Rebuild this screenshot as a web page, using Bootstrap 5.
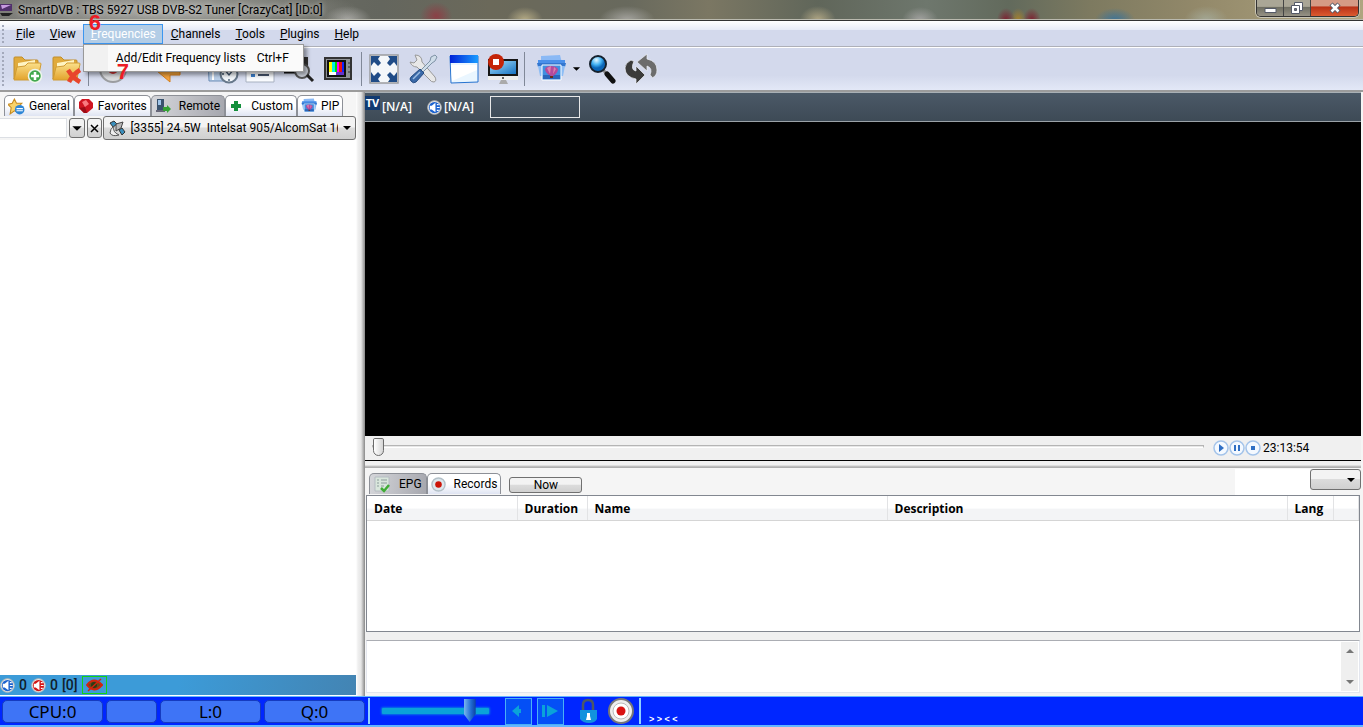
<!DOCTYPE html>
<html lang="en">
<head>
  <meta charset="UTF-8">
  <meta name="viewport" content="width=device-width, initial-scale=1.0">
  <title>SmartDVB</title>
  <link href="https://cdn.jsdelivr.net/npm/bootstrap@5.3.0/dist/css/bootstrap.min.css" rel="stylesheet">
  <style>
    body {
      font-family: Roboto, "Open Sans", sans-serif;
      font-size: 12px;
      line-height: 16px;
      color: #000;
      background: #f5f5f5;
    }
    button { padding: 0; color: inherit; }
    svg { display: block; flex: none; }

    /* title bar */
    .title-bar {
      height: 21px;
      border-bottom: 1px solid #333;
      box-shadow: inset 0 -1px #b9b9ae;
      background:
        radial-gradient(ellipse 190px 26px at 170px 10px, rgba(190,190,186,.75), transparent),
        radial-gradient(ellipse 24px 14px at 25.5% 100%, #a8a8a4, transparent),
        radial-gradient(ellipse 16px 14px at 32% 80%, #8b4046, transparent),
        radial-gradient(ellipse 18px 13px at 38.5% 100%, #b5ab85, transparent),
        radial-gradient(ellipse 28px 14px at 46% 100%, #a5a49f, transparent),
        radial-gradient(ellipse 18px 14px at 60% 100%, #b0a684, transparent),
        radial-gradient(ellipse 18px 13px at 67.5% 100%, #a2a2a0, transparent),
        radial-gradient(ellipse 9px 12px at 73.8% 100%, #7d2130, transparent),
        radial-gradient(ellipse 8px 12px at 74.7% 100%, #a5802c, transparent),
        radial-gradient(ellipse 9px 12px at 75.7% 100%, #7d2130, transparent),
        radial-gradient(ellipse 20px 12px at 81.8% 100%, #3e7396, transparent),
        radial-gradient(ellipse 22px 14px at 88.5% 100%, #a3a794, transparent),
        linear-gradient(90deg, #777772, #64665e 28%, #6b695a 36%, #68695d 46%, #7b7763 52%, #60665a 60%, #6e776d 68%, #626a5c 74%, #7d7a60 80%, #93896a 88%, #afa580);
    }
    .title-text { text-shadow: 0 0 5px #ddd; }
    .win-buttons {
      height: 17px;
      border: 1px solid #333;
      border-top: 0;
      border-radius: 0 0 5px 5px;
      box-shadow: 0 0 0 1px #c9c5b5;
      overflow: hidden;
    }
    .win-btn {
      width: 27px;
      border: 0;
      border-right: 1px solid #444;
      background: linear-gradient(#aaa696 40%, #6f6e62 45%, #969285);
    }
    .win-close {
      width: 47px;
      border: 0;
      background: linear-gradient(#d59a86 35%, #b93218 45%, #dc5b30);
    }

    /* menu bar */
    .menu-bar {
      height: 27px;
      padding: 3px 0 3px 8px;
      border-bottom: 1px solid #fff;
      box-shadow: inset 0 -1px #aeb0b8;
      background: linear-gradient(#fff, #e7ebf7 9px, #d3d9ec 9px);
    }
    .grip::before {
      content: "";
      position: absolute;
      left: 2px;
      top: 4px;
      bottom: 4px;
      border-left: 2px dotted #a3a9bb;
    }
    .menu-link {
      height: 20px;
      padding: 1px 6px 1px 7px;
      border: 1px solid transparent;
      background: transparent;
    }
    .menu-link:first-letter { text-decoration: underline; }
    .menu-link.open {
      color: #fff;
      border-color: #3c96f0;
      background: #b3cde6;
    }
    .drop-box {
      top: 20px;
      left: 0;
      width: 221px;
      height: 28px;
      border: 1px solid #999;
      background: linear-gradient(90deg, #f1f1f1 24px, #fafafa 24px);
      box-shadow: 3px 3px 4px rgba(0,0,0,.4);
      z-index: 20;
    }
    .drop-entry {
      padding: 0 14px 0 32px;
      border: 0;
      background: transparent;
    }
    .step-mark {
      z-index: 30;
      font: bold 22px/22px "Liberation Sans", sans-serif;
      color: #ed1c24;
    }
    .step-six { left: 6px; top: -12px; }
    .step-seven { left: 34px; top: 37px; }

    /* toolbar */
    .tool-bar {
      height: 44px;
      padding-left: 8px;
      border-bottom: 2px solid #9b9b9b;
      background: linear-gradient(#d3d9ec 65%, #e3e8f7);
    }
    .tool-btn {
      width: 39px;
      height: 40px;
      border: 0;
      background: transparent;
    }
    .tool-btn svg { margin: auto; }
    .tool-drop {
      width: 16px;
      height: 40px;
      border: 0;
      background: transparent;
    }
    .tool-sep { width: 7px; height: 34px; }
    .tool-sep::after {
      content: "";
      display: block;
      width: 1px;
      height: 34px;
      margin-left: 2px;
      background: #808898;
    }

    /* side panel */
    .side-panel { width: 356px; }
    .tab-strip { height: 24px; padding: 3px 0 0 4px; }
    .tab-btn {
      height: 21px;
      gap: 4px;
      padding: 0 3px;
      border: 1px solid #8d9097;
      border-bottom: 0;
      border-radius: 5px 5px 0 0;
      background: linear-gradient(#fff 50%, #dfe4f2);
    }
    .tab-btn.chosen { background: linear-gradient(100deg, #d5d6da, #a6a7ae); }
    .search-box {
      width: 67px;
      height: 20px;
      border: 1px solid #dcdfe4;
      border-left: 0;
      outline: 0;
    }
    .face {
      border: 1px solid #707070;
      border-radius: 3px;
      background: linear-gradient(#f3f3f3 45%, #dcdcdc 50%, #d0d0d0);
    }
    .mini-btn { width: 18px; height: 20px; margin-left: 2px; }
    .mini-btn svg { margin: auto; }
    .sat-face { height: 24px; margin-left: 1px; padding: 0 3px 0 1px; min-width: 0; }
    .plain-select {
      appearance: none;
      border: 0;
      outline: 0;
      min-width: 0;
      background: transparent;
      color: inherit;
    }
    .side-list { background: #fff; }
    .side-status {
      height: 20px;
      gap: 4px;
      font-size: 14px;
      font-weight: 500;
      color: #10202c;
      background: linear-gradient(100deg, #3c9bd8 50%, #4384b3);
    }
    .hidden-mark { border: 1px solid #14d214; padding: 0 3px; }
    .v-split {
      width: 9px;
      background: linear-gradient(90deg, #fff, #efefef 2px, #e6e6e6 5px, #a0a0a0 8px, #888);
    }

    /* video side */
    .video-side { margin-right: 2px; }
    .info-bar {
      height: 30px;
      color: #fff;
      font-family: "Open Sans", sans-serif;
      border-top: 1px solid #a9b0b5;
      border-bottom: 1px solid #9aa1a7;
      background: linear-gradient(#4b5967, #3d4a56);
    }
    .tv-tag {
      width: 15px;
      height: 14px;
      margin: 3px 2px 0 0;
      font-size: 11px;
      line-height: 14px;
      background: #103a72;
    }
    .info-sound { margin: 0 2px 0 15px; }
    .info-field { width: 90px; height: 22px; border: 1px solid #e8e8e8; background: transparent; }
    .seek-bar {
      height: 25px;
      border-bottom: 1px solid #000;
      background: #f0f0f0;
    }
    .seek-range { appearance: none; height: 20px; margin: 0 9px 0 7px; background: transparent; }
    .seek-range::-webkit-slider-runnable-track {
      height: 3px;
      border: 1px solid #b5b5b5;
      border-bottom-color: #fff;
      background: #e7e7e7;
    }
    .seek-range::-webkit-slider-thumb {
      appearance: none;
      width: 11px;
      height: 18px;
      margin-top: -8px;
      border: 1px solid #6b6b6b;
      border-radius: 2px 2px 6px 6px;
      background: linear-gradient(90deg, #fff, #d5d5d5);
    }
    .play-btn { border: 0; background: transparent; }
    .clock-text { width: 98px; margin-left: 2px; }
    .h-split {
      height: 8px;
      background: linear-gradient(#f0f0f0 50%, #ccc 62%, #a5a5a5 80%, #f6f6f6 90%);
    }
    .epg-strip { height: 26px; padding-left: 4px; }
    .epg-strip .tab-btn { margin: 4px 0 1px; }
    .epg-blank { width: 75px; background: #fff; }
    .now-btn { width: 73px; height: 16px; line-height: 14px; }
    .lang-face { width: 51px; height: 21px; }

    /* guide table */
    .guide {
      height: 137px;
      margin: 0 1px;
      border: 1px solid #828790;
      background: #fff;
    }
    .guide-table { table-layout: fixed; width: 100%; }
    .guide-table th {
      height: 24px;
      padding: 2px 7px 0;
      font-family: "Open Sans", sans-serif;
      border-right: 1px solid #e2e3e5;
      border-bottom: 1px solid #d5d5d5;
      background: linear-gradient(#fff 50%, #f3f4f6 55%);
    }
    .c-date { width: 150px; }
    .c-dur { width: 70px; }
    .c-name { width: 300px; }
    .c-desc { width: 400px; }
    .c-lang { width: 46px; }
    .note-gap { height: 8px; background: #f0f0f0; }
    .note-box {
      height: 53px;
      margin: 0 1px 3px;
      resize: none;
      outline: 0;
      border: 1px solid #e3e6ee;
      border-top-color: #abadb3;
    }
    .note-scroll { top: 2px; right: 3px; width: 17px; height: 49px; padding: 6px 0; background: #efefef; }

    /* bottom bar */
    .bottom-bar {
      height: 31px;
      padding-left: 2px;
      border-top: 1px solid #63b6ff;
      border-bottom: 2px solid #63b6ff;
      background: #0026ff;
    }
    .meter {
      width: 101px;
      height: 23px;
      margin-right: 3px;
      border: 1px solid #153bc0;
      border-radius: 5px;
      font: 17px/21px "Noto Sans", sans-serif;
      background: #3e74f6;
    }
    .meter-small { width: 51px; }
    .bar-line { width: 2px; height: 26px; background: #8fd0ff; }
    .volume { appearance: none; width: 107px; height: 24px; margin: 0 16px 0 12px; background: transparent; }
    .volume::-webkit-slider-runnable-track {
      height: 6px;
      border-radius: 1px;
      background: #0aa2d9;
      box-shadow: 0 0 2px 1px #0876e6;
    }
    .volume::-webkit-slider-thumb {
      appearance: none;
      width: 12px;
      height: 23px;
      margin-top: -9px;
      background: linear-gradient(90deg, #79b5ee, #1e69d2 60%, #0d3f9d);
      clip-path: polygon(0 0, 100% 0, 100% 65%, 50% 100%, 0 65%);
    }
    .nav-btn { width: 27px; height: 27px; margin-right: 5px; border: 1px solid #4ab0f5; background: #044ff6; }
    .nav-btn svg { margin: auto; }
    .round-btn { border: 0; background: transparent; }
    .lock-btn { margin: 0 10px; }
    .bar-end { margin: 0 8px 0 5px; }
    .ticker { font: bold 9px/11px "Liberation Sans", sans-serif; color: #fff; }
  </style>
</head>
<body>
  <svg width="0" height="0" class="position-absolute" aria-hidden="true">
    <defs>
      <linearGradient id="gold" x2="0" y2="1"><stop stop-color="#fbe08a"/><stop offset="1" stop-color="#e2a32c"/></linearGradient>
      <linearGradient id="sky" x2="1" y2="1"><stop stop-color="#a6e0fb"/><stop offset="1" stop-color="#1672c4"/></linearGradient>
      <linearGradient id="bluebar" x2="1"><stop stop-color="#0022d8"/><stop offset="1" stop-color="#1a9cff"/></linearGradient>
      <radialGradient id="lens" cx=".4" cy=".25"><stop stop-color="#e6f8ff"/><stop offset=".6" stop-color="#45b4f4"/><stop offset="1" stop-color="#0b66b8"/></radialGradient>
    </defs>
    <symbol id="folder" viewBox="0 0 30 30">
      <path d="M2 25V4q0-1 1-1h7l3 3h12q1 0 1 1v3H8z" fill="#e0aa3c" stroke="#c08d2a"/>
      <path d="M6 9l17-3v10H6z" fill="#fff4c2"/>
      <path d="M2 26L5 13l8-1 3-3h12q1 0 1 1l-3 15q0 1-1 1z" fill="url(#gold)" stroke="#d09c34"/>
    </symbol>
    <symbol id="speaker" viewBox="0 0 16 16">
      <circle cx="8" cy="8" r="7.300" fill="#e8e8e8" stroke="#b9b9b9"/>
      <circle cx="8" cy="8" r="6" fill="currentColor"/>
      <path d="M3 6h2l4-3v10L5 10H3z" fill="#fff"/>
      <path d="M10.500 5h2M10.500 8h3M10.500 11h2" stroke="#fff" stroke-width="1.300"/>
    </symbol>
    <symbol id="printer" viewBox="0 0 30 30">
      <path d="M5 2l19-1 2 8H5z" fill="#8ab9f5"/>
      <path d="M2 6h27v6H2z" fill="#4a90ea"/>
      <path d="M1 9h29l-1 4H2z" fill="#3377d0"/>
      <path d="M2 12h27l-2 10H4z" fill="#8dbdf5"/>
      <path d="M6 11h19v15H6z" fill="#3f8fe0" stroke="#fff"/>
      <path d="M7 21h17v4H7z" fill="#2a66bb"/>
      <path d="M9 15q1-3 6-3t7 3q0 4-5 7h-2q-6-3-6-7z" fill="#b34a9c"/>
      <path d="M11 14l3 6 1-8zM18 13l-1 7 3-5z" fill="#dd7fae"/>
      <path d="M14 22h3v2h-3z" fill="#6d2d15"/>
    </symbol>
    <symbol id="target" viewBox="0 0 26 26">
      <circle cx="13" cy="13" r="12" fill="#eee" stroke="#777" stroke-width="2"/>
      <circle cx="13" cy="13" r="8" fill="#fff" stroke="#bbb"/>
      <circle cx="13" cy="13" r="4.500" fill="#d91212"/>
    </symbol>
    <symbol id="softtarget" viewBox="0 0 16 16">
      <circle cx="8" cy="8" r="7" fill="#dde6ec" stroke="#b3c0c8" stroke-width="1.500"/>
      <circle cx="8" cy="8" r="3.500" fill="#cc1508"/>
    </symbol>
    <symbol id="caret" viewBox="0 0 10 6"><path d="M1 1h8L5 5z"/></symbol>
  </svg>

  <div class="d-flex flex-column vh-100 overflow-hidden">
    <!-- title bar -->
    <header class="title-bar d-flex align-items-start justify-content-between flex-shrink-0">
      <div class="d-flex align-items-center title-text pt-1">
        <svg width="14" height="12" viewBox="0 0 14 12"><path d="M0 0h12v7H0z" fill="#51306c"/><path d="M1 1h10l-9 4z" fill="#c79be0"/><path d="M0 9h13l-4 3H2z" fill="#222"/></svg>
        <span class="ms-1 lh-1">SmartDVB : TBS 5927 USB DVB-S2 Tuner [CrazyCat] [ID:0]</span>
      </div>
      <div class="win-buttons d-flex me-1">
        <button class="win-btn" aria-label="Minimize"><svg class="m-auto" width="14" height="12" viewBox="0 0 14 12"><path d="M2 6.500h11v4H2z" fill="#fff" stroke="#555a68"/></svg></button>
        <button class="win-btn" aria-label="Restore"><svg class="m-auto" width="14" height="14" viewBox="0 0 14 14"><path d="M4.500 1.500h8v8h-8z" fill="#fff" stroke="#555a68"/><path d="M1.500 4.500h8v8h-8z" fill="#fff" stroke="#555a68"/><path d="M4.500 7.500h2v2h-2z" fill="#777" stroke="#555a68"/></svg></button>
        <button class="win-close" aria-label="Close"><svg class="m-auto" width="12" height="12" viewBox="0 0 12 12"><path d="M2 2l8 8M10 2l-8 8" stroke="#555a68" stroke-width="4.500"/><path d="M2.500 2.500l7 7M9.500 2.500l-7 7" stroke="#fff" stroke-width="2.500"/></svg></button>
      </div>
    </header>

    <!-- menu bar -->
    <nav class="menu-bar grip position-relative d-flex flex-shrink-0">
      <button class="menu-link">File</button>
      <button class="menu-link">View</button>
      <div class="position-relative">
        <button class="menu-link open" aria-expanded="true">Frequencies</button>
        <div class="drop-box position-absolute d-flex">
          <button class="drop-entry d-flex align-items-center justify-content-between w-100"><span>Add/Edit Frequency lists</span><span>Ctrl+F</span></button>
        </div>
        <span class="step-mark step-six position-absolute">6</span>
        <span class="step-mark step-seven position-absolute">7</span>
      </div>
      <button class="menu-link">Channels</button>
      <button class="menu-link">Tools</button>
      <button class="menu-link">Plugins</button>
      <button class="menu-link">Help</button>
    </nav>

    <!-- toolbar -->
    <div class="tool-bar grip position-relative d-flex align-items-center flex-shrink-0">
      <button class="tool-btn" aria-label="Add folder"><svg width="31" height="31" viewBox="0 0 31 31"><use href="#folder" width="30" height="30"/><circle cx="23" cy="22" r="6.500" fill="#42a84e" stroke="#eef7ec" stroke-width="1.500"/><path d="M23 18v8M19 22h8" stroke="#fff" stroke-width="2.500"/></svg></button>
      <button class="tool-btn" aria-label="Delete folder"><svg width="31" height="31" viewBox="0 0 31 31"><use href="#folder" width="30" height="30"/><path d="M17 16q5 8 12 12M29 16q-7 4-11 12" fill="none" stroke="#e8452c" stroke-width="4.500"/></svg></button>
      <span class="tool-sep"></span>
      <button class="tool-btn" aria-label="Record"><svg width="30" height="30" viewBox="0 0 30 30"><circle cx="15" cy="15" r="13" fill="#d9dbdd" stroke="#9b9da0" stroke-width="2"/><circle cx="15" cy="15" r="5" fill="#c33"/></svg></button>
      <button class="tool-drop" aria-label="Record options"></button>
      <button class="tool-btn" aria-label="Back"><svg width="28" height="28" viewBox="0 0 28 28"><path d="M3 16L15 5v6h11v9H16v7z" fill="#f5a43c" stroke="#d57f1d"/></svg></button>
      <button class="tool-drop" aria-label="Back options"></button>
      <button class="tool-btn" aria-label="Scheduler"><svg width="32" height="30" viewBox="0 0 32 30"><path d="M1 4h20v23H2z" fill="#b9cfe9" stroke="#6e8fb7"/><path d="M6 5v21" stroke="#fff" stroke-width="2"/><circle cx="22" cy="20" r="8.500" fill="#f3f7fb" stroke="#67788b" stroke-width="2"/><path d="M17 15l5 6 5-6M22 13v2M22 25v2M15 20h2" fill="none" stroke="#3e536b" stroke-width="1.300"/></svg></button>
      <button class="tool-btn pe-1" aria-label="List"><svg width="30" height="30" viewBox="0 0 30 30"><path d="M1 2h28v26H1z" fill="#f9fbfe" stroke="#a8b1c1"/><path d="M6 12h4v4H6zM6 20h4v3H6z" fill="#3c7ecb"/><path d="M13 14h12M13 21h11" stroke="#44536a" stroke-width="2"/></svg></button>
      <button class="tool-btn pe-1" aria-label="Scan"><svg width="32" height="30" viewBox="0 0 32 30"><path d="M1 18h22" stroke="#111" stroke-width="3"/><path d="M20 3h5v10h-5z" fill="#333"/><circle cx="19" cy="17" r="7" fill="#d6dbe5" stroke="#555" stroke-width="2"/><path d="M24 21l6 6" stroke="#222" stroke-width="3"/></svg></button>
      <button class="tool-btn pe-1" aria-label="Television"><svg width="30" height="30" viewBox="0 0 30 30"><path d="M2 4h26v21H2z" fill="#8f9295" stroke="#333" stroke-width="2"/><path d="M4 6h19v17H4z" fill="#111"/><path d="M6 8h3v10H6z" fill="#ff0"/><path d="M9 8h3v10H9z" fill="#0ee"/><path d="M12 8h2v10h-2z" fill="#0d0"/><path d="M14 8h2v10h-2z" fill="#f0f"/><path d="M16 8h3v10h-3z" fill="#e11"/><path d="M19 8h2v10h-2z" fill="#12f"/><path d="M6 18h7v3H6z" fill="#fff"/><path d="M13 18h8v3h-8z" fill="#63c"/><path d="M25 9h2M25 13h2M25 18h2" stroke="#333"/></svg></button>
      <span class="tool-sep"></span>
      <button class="tool-btn pe-1" aria-label="Full screen"><svg width="30" height="30" viewBox="0 0 30 30"><path d="M1 1h28v28H1z" fill="#f4f7fa" stroke="#9a9c9e" stroke-width="1.500"/><path d="M2 2h9L9 5l3 4-3 3-4-4-3 4zM28 2h-9l2 3-3 4 3 3 4-4 3 4zM2 28h9l-2-3 3-4-3-3-4 4-3-4zM28 28h-9l2-3-3-4 3-3 4 4 3-4z" fill="#204c87"/></svg></button>
      <button class="tool-btn pe-1" aria-label="Settings"><svg width="30" height="30" viewBox="0 0 30 30"><path d="M2 8l4 1 3-3-2-5q7 0 7 7l13 15q2 4-1 5-3 0-4-2L9 13q-5 0-7-5z" fill="#e8e8e8" stroke="#999"/><path d="M12 17L22 7l1-4 4-2 2 2-2 4-3 2-10 10z" fill="#cfdde9" stroke="#7f93a6"/><path d="M12 15l4 4-8 9q-3 2-5-1-2-2 0-4z" fill="#3a69a8" stroke="#244b80"/><path d="M5 25l7-7" stroke="#9dbde2" stroke-width="1.500"/></svg></button>
      <button class="tool-btn" aria-label="Window"><svg width="30" height="30" viewBox="0 0 30 30"><path d="M1 2h28v26L2 29z" fill="#eaf6ff" stroke="#2673d0"/><path d="M2 11h26v5L3 27z" fill="#fff"/><path d="M1 1h28v8H1z" fill="url(#bluebar)"/></svg></button>
      <button class="tool-btn" aria-label="Stop display"><svg width="32" height="31" viewBox="0 0 32 31"><path d="M1 5h30v21H1z" fill="#eee"/><path d="M1 5h30v17H1z" fill="#161616"/><path d="M3 7h26v13H3z" fill="url(#sky)"/><path d="M14 26h5l2 4h-9z" fill="#aaa"/><circle cx="16" cy="24" r="1" fill="#333"/><circle cx="9" cy="8" r="8" fill="#c42408"/><path d="M6 5h6v6H6z" fill="#fff"/></svg></button>
      <span class="tool-sep"></span>
      <button class="tool-btn ps-1" aria-label="Snapshot"><svg width="30" height="30"><use href="#printer"/></svg></button>
      <button class="tool-drop" aria-label="Snapshot options"><svg class="m-auto" width="9" height="6"><use href="#caret"/></svg></button>
      <button class="tool-btn pe-1" aria-label="Search"><svg width="30" height="30" viewBox="0 0 30 30"><path d="M16 16l4 4" stroke="#888" stroke-width="3"/><path d="M20 20l6 7" stroke="#111" stroke-width="5" stroke-linecap="round"/><circle cx="11" cy="10" r="8" fill="url(#lens)" stroke="#15202c" stroke-width="2"/></svg></button>
      <button class="tool-btn pe-1" aria-label="Refresh"><svg width="34" height="32" viewBox="0 0 34 32"><path d="M13 9L23 1v5q10 2 10 11 0 6-5 8 0-2-2-3 3-7-3-9v5z" fill="#6c6c6c" stroke="#eef0f6" stroke-width=".7"/><path d="M21 22L12 31v-5Q1 24 1 15q0-5 6-8 1 1 3 1-4 9 2 10v-5z" fill="#3b3b3b" stroke="#eef0f6" stroke-width=".7"/></svg></button>
    </div>

    <main class="d-flex flex-grow-1 overflow-hidden">
      <!-- side panel -->
      <aside class="side-panel d-flex flex-column flex-shrink-0">
        <div class="tab-strip d-flex">
          <button class="tab-btn d-flex align-items-center"><svg width="17" height="17" viewBox="0 0 16 16"><path d="M6 1l2 4 5 0-4 4 1 5-4-2-4 3 1-6-3-3 4-1z" fill="#f9d36a" stroke="#c78b20"/><circle cx="11" cy="11" r="4.500" fill="#2e86d6"/><path d="M8 10h6M8 12h6" stroke="#fff"/></svg>General</button>
          <button class="tab-btn d-flex align-items-center"><svg width="16" height="16" viewBox="0 0 16 16"><path d="M4 1h7l4 4v5l-6 5H6l-5-5V4z" fill="#cf1420"/><path d="M4 4l4-2 3 4-4 3z" fill="#f87a7f"/><path d="M1 10l6-1 2 6H6z" fill="#9c0c16"/></svg>Favorites</button>
          <button class="tab-btn chosen d-flex align-items-center pe-1"><svg class="me-1" width="16" height="16" viewBox="0 0 16 16"><path d="M2 1h7v13H2z" fill="#39536e"/><path d="M3 2h3v5H3z" fill="#9fc4e8"/><path d="M1 12h9v2H1z" fill="#667"/><path d="M8 9h4V7l4 4-4 4v-2H8z" fill="#35a335"/></svg>Remote</button>
          <button class="tab-btn d-flex align-items-center"><svg class="me-1" width="14" height="14" viewBox="0 0 14 14"><path d="M5 2h4v3h3v4H9v3H5V9H2V5h3z" fill="#14903c"/></svg>Custom</button>
          <button class="tab-btn d-flex align-items-center"><svg width="16" height="16"><use href="#printer"/></svg>PIP</button>
        </div>
        <div class="d-flex align-items-center">
          <input class="search-box" type="text" aria-label="Search channel">
          <button class="face mini-btn" aria-label="Filter"><svg width="12" height="7"><use href="#caret"/></svg></button>
          <button class="face mini-btn" aria-label="Clear"><svg width="9" height="9" viewBox="0 0 9 9"><path d="M1 1l7 7M8 1L1 8" stroke="#000" stroke-width="1.500"/></svg></button>
          <div class="face sat-face d-flex align-items-center flex-grow-1">
            <svg class="me-1 ms-1" width="17" height="17" viewBox="0 0 17 17"><path d="M1 3l4-2 3 3-4 3zM10 10l3-2 3 4-3 3z" fill="#3a8fbd" stroke="#333"/><path d="M5 6q-2 6 5 9-7 2-9-2 0-4 4-7z" fill="#eee" stroke="#555"/><path d="M7 4l7-2-2 6-5 3z" fill="#b9b9b9" stroke="#444"/></svg>
            <select class="plain-select flex-grow-1" aria-label="Satellite"><option>[3355] 24.5W&nbsp; Intelsat 905/AlcomSat 1(24.5W)</option></select>
            <svg class="ms-1" width="10" height="6"><use href="#caret"/></svg>
          </div>
        </div>
        <div class="side-list flex-grow-1"></div>
        <div class="side-status d-flex align-items-center">
          <svg width="15" height="15" color="#1d63cf"><use href="#speaker"/></svg><span>0</span>
          <svg width="15" height="15" color="#d31515"><use href="#speaker"/></svg><span>0</span>
          <span>[0]</span>
          <span class="hidden-mark"><svg width="17" height="16" viewBox="0 0 17 16"><path d="M1 8q7-9 15 0-8 9-15 0z" fill="#6b4a1b" stroke="#d3230c" stroke-width="2"/><circle cx="8" cy="8" r="3" fill="#2c3a14"/><path d="M2 14L15 2" stroke="#d3230c" stroke-width="1.500"/></svg></span>
        </div>
        <div class="border-bottom border-white"></div>
      </aside>
      <div class="v-split flex-shrink-0"></div>

      <!-- video and guide -->
      <section class="video-side d-flex flex-column flex-grow-1 overflow-hidden">
        <div class="info-bar d-flex align-items-center flex-shrink-0 fw-semibold">
          <span class="tv-tag align-self-start fw-bold text-center">TV</span>
          <span>[N/A]</span>
          <svg class="info-sound" width="15" height="15" color="#1d63cf"><use href="#speaker"/></svg>
          <span class="me-3">[N/A]</span>
          <input class="info-field" type="text" aria-label="Signal info">
        </div>
        <div class="bg-black flex-grow-1"></div>
        <div class="seek-bar d-flex align-items-center flex-shrink-0">
          <input class="seek-range align-self-start flex-grow-1" type="range" value="0" aria-label="Position">
          <button class="play-btn" aria-label="Play"><svg width="16" height="16" viewBox="0 0 16 16"><circle cx="8" cy="8" r="7" fill="#f4f9ff" stroke="#a4c4ea" stroke-width="1.500"/><path d="M6 4l5 4-5 4z" fill="#2f6fc4"/></svg></button>
          <button class="play-btn" aria-label="Pause"><svg width="16" height="16" viewBox="0 0 16 16"><circle cx="8" cy="8" r="7" fill="#f4f9ff" stroke="#a4c4ea" stroke-width="1.500"/><path d="M5 5h2v6H5zM9 5h2v6H9z" fill="#2f6fc4"/></svg></button>
          <button class="play-btn" aria-label="Stop"><svg width="16" height="16" viewBox="0 0 16 16"><circle cx="8" cy="8" r="7" fill="#f4f9ff" stroke="#a4c4ea" stroke-width="1.500"/><path d="M6 6h4v4H6z" fill="#2f6fc4"/></svg></button>
          <span class="clock-text">23:13:54</span>
        </div>
        <div class="h-split flex-shrink-0"></div>
        <div class="epg-strip d-flex flex-shrink-0">
          <button class="tab-btn chosen d-flex align-items-center pe-1 ps-1"><svg class="me-1" width="17" height="17" viewBox="0 0 17 17"><path d="M1 1h14v14H1z" fill="#d9e6dc" stroke="#b5bcc2"/><path d="M3 4h2M3 7h2M3 10h2M7 4h6M7 7h6M7 10h3" stroke="#8b9b9a"/><path d="M7 12l3 3 5-6" fill="none" stroke="#3fac35" stroke-width="2.500"/></svg>EPG</button>
          <button class="tab-btn d-flex align-items-center"><svg class="me-1" width="15" height="15"><use href="#softtarget"/></svg>Records</button>
          <button class="face now-btn ms-2 mt-2">Now</button>
          <div class="flex-grow-1"></div>
          <div class="epg-blank"></div>
          <div class="face lang-face d-flex align-items-center pe-1">
            <select class="plain-select flex-grow-1" aria-label="Guide language"><option></option></select>
            <svg width="10" height="6"><use href="#caret"/></svg>
          </div>
        </div>
        <div class="guide flex-shrink-0">
          <table class="guide-table">
            <thead>
              <tr>
                <th class="c-date">Date</th>
                <th class="c-dur">Duration</th>
                <th class="c-name">Name</th>
                <th class="c-desc">Description</th>
                <th class="c-lang">Lang</th>
                <th></th>
              </tr>
            </thead>
          </table>
        </div>
        <div class="note-gap flex-shrink-0"></div>
        <div class="position-relative d-flex flex-shrink-0">
          <textarea class="note-box flex-grow-1" aria-label="Programme details"></textarea>
          <div class="note-scroll position-absolute d-flex flex-column align-items-center justify-content-between">
            <svg width="8" height="5" viewBox="0 0 8 5"><path d="M0 5h8L4 1z" fill="#777"/></svg>
            <svg width="8" height="5" viewBox="0 0 8 5"><path d="M0 0h8L4 4z" fill="#777"/></svg>
          </div>
        </div>
      </section>
    </main>

    <!-- bottom bar -->
    <footer class="bottom-bar d-flex align-items-center flex-shrink-0">
      <div class="meter text-center">CPU:0</div>
      <div class="meter meter-small"></div>
      <div class="meter text-center">L:0</div>
      <div class="meter text-center">Q:0</div>
      <span class="bar-line"></span>
      <input class="volume" type="range" value="86" aria-label="Volume">
      <button class="nav-btn" aria-label="Previous"><svg width="15" height="15" viewBox="0 0 15 15"><path d="M1 7l7-6v4h2v4H8v4z" fill="#0aa2d9"/></svg></button>
      <button class="nav-btn" aria-label="Next"><svg width="17" height="15" viewBox="0 0 17 15"><path d="M0 1h3v12H0zM5 1l11 6-11 6z" fill="#0aa2d9"/></svg></button>
      <button class="round-btn lock-btn" aria-label="Lock"><svg width="19" height="26" viewBox="0 0 19 26"><path d="M4 12V7q0-5 5-5t5 5v5" fill="none" stroke="#4b5866" stroke-width="2.500"/><path d="M1 12h17v9q-2 4-8 4t-9-4z" fill="#1292dd"/><path d="M8 15h3v3l1 4H7l1-4z" fill="#fff"/></svg></button>
      <button class="round-btn" aria-label="Start recording"><svg width="26" height="26"><use href="#target"/></svg></button>
      <span class="bar-line bar-end"></span>
      <span class="ticker align-self-end">&gt; &gt; &lt; &lt;</span>
    </footer>
  </div>

  <script src="https://cdn.jsdelivr.net/npm/bootstrap@5.3.0/dist/js/bootstrap.bundle.min.js"></script>
</body>
</html>
